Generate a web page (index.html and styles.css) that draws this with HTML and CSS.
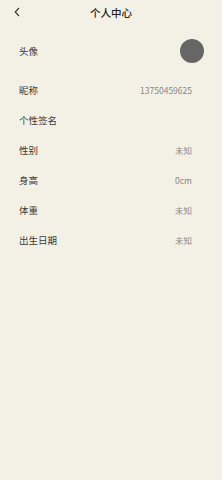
FILE: index.html
```html
<!DOCTYPE html>
<html lang="zh">
<head>
<meta charset="utf-8">
<link rel="stylesheet" href="styles.css">
</head>
<body>
<div class="page">
  <header class="nav">
    <span class="back"><svg width="6" height="10" viewBox="0 0 6 10"><path d="M5 1 L1.2 5 L5 9" fill="none" stroke="#333" stroke-width="1.1"/></svg></span>
    <span class="title">个人中心</span>
  </header>
  <div class="list">
    <div class="row avatar-row"><span class="label">头像</span><span class="avatar"></span></div>
    <div class="row"><span class="label">昵称</span><span class="value">13750459625</span></div>
    <div class="row"><span class="label">个性签名</span><span class="value"></span></div>
    <div class="row"><span class="label">性别</span><span class="value">未知</span></div>
    <div class="row"><span class="label">身高</span><span class="value">0cm</span></div>
    <div class="row"><span class="label">体重</span><span class="value">未知</span></div>
    <div class="row"><span class="label">出生日期</span><span class="value">未知</span></div>
  </div>
</div>
</body>
</html>
```
FILE: styles.css
```css
html, body { margin: 0; padding: 0; }
body {
  background: #f3f0e6;
  font-family: "Noto Sans CJK SC", "Noto Sans", sans-serif;
  color: #333;
}
.page { width: 222px; min-height: 480px; }
.nav {
  height: 25px;
  display: flex;
  align-items: center;
  justify-content: center;
  position: relative;
}
.back {
  position: absolute;
  left: 14px;
  top: 7px;
  display: flex;
}
.title { font-size: 10.5px; font-weight: 500; color: #222; }
.list { padding: 0 30px 0 19px; }
.row {
  height: 30px;
  display: flex;
  align-items: center;
  justify-content: space-between;
}
.avatar-row { height: 49px; padding-top: 1px; }
.label { font-size: 9.5px; color: #3a3a3a; }
.value { font-size: 8.5px; color: #888; }
.avatar {
  width: 24px; height: 24px; border-radius: 50%;
  background: #666;
  margin-right: -12px;
}
```
